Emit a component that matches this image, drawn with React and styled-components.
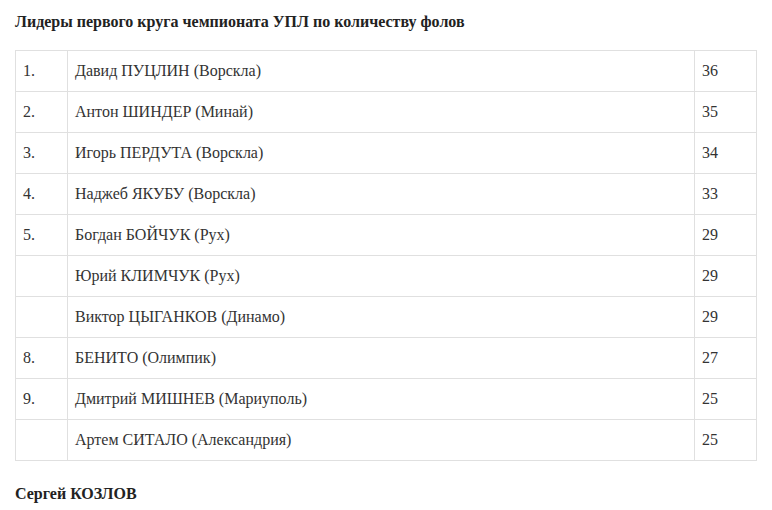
import React from 'react';
import styled, { createGlobalStyle } from 'styled-components';

const Global = createGlobalStyle`
    body {
        margin: 0;
        background: #fff;
        font-family: "Liberation Serif", "Times New Roman", serif;
        color: #333;
    }
`;

const Page = styled.div`
    padding: 11px 15px 0 15px;
`;

const Title = styled.p`
    margin: 0 0 17px 0;
    font-size: 16px;
    line-height: 22px;
    font-weight: bold;
    color: #222;
`;

const Table = styled.table`
    width: 100%;
    border-collapse: collapse;
    font-size: 16px;
`;

const Cell = styled.td`
    border: 1px solid #e0e0e0;
    padding: 8px 7px;
    line-height: 24px;
    height: 24px;
    width: ${p => p.$w || 'auto'};
    vertical-align: top;
`;

const Author = styled.p`
    margin: 22px 0 0 0;
    font-size: 16px;
    line-height: 22px;
    font-weight: bold;
    color: #222;
`;

const rows = [
    ['1.', 'Давид ПУЦЛИН (Ворскла)', '36'],
    ['2.', 'Антон ШИНДЕР (Минай)', '35'],
    ['3.', 'Игорь ПЕРДУТА (Ворскла)', '34'],
    ['4.', 'Наджеб ЯКУБУ (Ворскла)', '33'],
    ['5.', 'Богдан БОЙЧУК (Рух)', '29'],
    ['', 'Юрий КЛИМЧУК (Рух)', '29'],
    ['', 'Виктор ЦЫГАНКОВ (Динамо)', '29'],
    ['8.', 'БЕНИТО (Олимпик)', '27'],
    ['9.', 'Дмитрий МИШНЕВ (Мариуполь)', '25'],
    ['', 'Артем СИТАЛО (Александрия)', '25'],
];

export default function App() {
    return (
        <Page>
            <Global />
            <Title>Лидеры первого круга чемпионата УПЛ по количеству фолов</Title>
            <Table>
                <tbody>
                    {rows.map((r, i) => (
                        <tr key={i}>
                            <Cell $w="37px">{r[0]}</Cell>
                            <Cell>{r[1]}</Cell>
                            <Cell $w="47px">{r[2]}</Cell>
                        </tr>
                    ))}
                </tbody>
            </Table>
            <Author>Сергей КОЗЛОВ</Author>
        </Page>
    );
}
